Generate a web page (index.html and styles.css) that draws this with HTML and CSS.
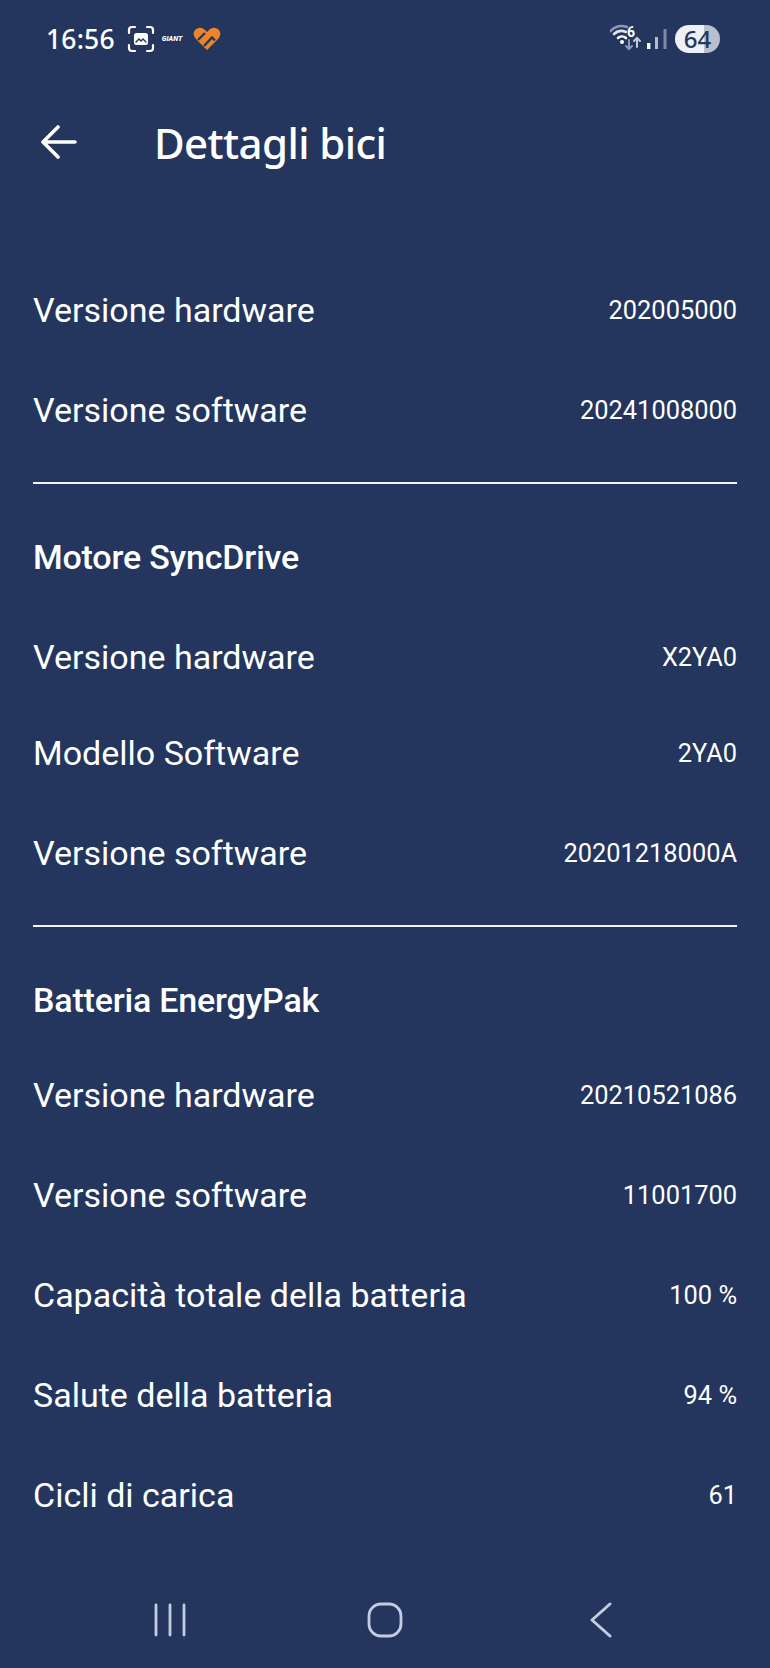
FILE: index.html
```html
<!DOCTYPE html>
<html lang="it">
<head>
    <meta charset="UTF-8">
    <meta name="viewport" content="width=device-width, initial-scale=1.0">
    <title>Dettagli bici</title>
    <link rel="stylesheet" href="styles.css">
</head>
<body>
    <div class="screen">
        <div class="status-bar">
            <div class="status-left">
                <span class="clock">16:56</span>
                <svg class="icon-shot" width="28" height="28" viewBox="0 0 28 28" fill="none" stroke="#fff" stroke-width="2.2" stroke-linecap="round">
                    <path d="M2 8V5a3 3 0 0 1 3-3h3M20 2h3a3 3 0 0 1 3 3v3M26 20v3a3 3 0 0 1-3 3h-3M8 26H5a3 3 0 0 1-3-3v-3"/>
                    <rect x="7" y="8" width="14" height="12" rx="2.5" fill="#fff" stroke="none"/>
                    <path d="M9 17l3-3 2 2 2-2 3 3" stroke="#24365e" stroke-width="1.4"/>
                </svg>
                <span class="giant-logo">GIANT</span>
                <svg class="icon-heart" width="28" height="26" viewBox="0 0 28 26" fill="none">
                    <path d="M14 24L2.5 12.5a6.500 6.500 0 0 1 0-9 6.500 6.500 0 0 1 9 0L14 6l2.500-2.500a6.500 6.500 0 0 1 9 0 6.500 6.500 0 0 1 0 9z" fill="#ee8427"/>
                    <path d="M5 14l7-7M11 20l8-8.500 3 3" stroke="#24365e" stroke-width="2.400"/>
                </svg>
            </div>
            <div class="status-right">
                <svg class="icon-wifi" width="34" height="30" viewBox="0 0 34 30" fill="none" stroke-linecap="round">
                    <path d="M0.500 7A16 16 0 0 1 17 3" stroke="#8d99b2" stroke-width="2.600"/>
                    <path d="M4 10A11 11 0 0 1 16 8" stroke="#dfe3ea" stroke-width="2.600"/>
                    <path d="M8 14A6 6 0 0 1 16 14" stroke="#fff" stroke-width="2.600"/>
                    <circle cx="12" cy="18" r="2" fill="#fff"/>
                    <path d="M19 16v9M16 22l3 3 3-3" stroke="#8d99b2" stroke-width="2"/>
                    <path d="M27 23v-9M24 17l3-3 3 3" stroke="#c5cbd8" stroke-width="2"/>
                </svg>
                <span class="wifi-six">6</span>
                <svg class="icon-signal" width="22" height="22" viewBox="0 0 22 22">
                    <rect x="2" y="15" width="3.400" height="6" fill="#fff"/>
                    <rect x="10" y="9" width="3" height="12" fill="#b4bccc"/>
                    <rect x="18.500" y="1" width="3" height="20" fill="#7d8aa6"/>
                </svg>
                <span class="battery">64</span>
            </div>
        </div>

        <div class="app-bar">
            <svg class="back-arrow" width="36" height="34" viewBox="0 0 36 34" fill="none" stroke="#fff" stroke-width="3.600" stroke-linecap="round" stroke-linejoin="round">
                <path d="M2 17h32M17 2L2 17l15 15"/>
            </svg>
            <h1>Dettagli bici</h1>
        </div>

        <div class="details">
            <div class="row"><span>Versione hardware</span><span class="value">202005000</span></div>
            <div class="row"><span>Versione software</span><span class="value">20241008000</span></div>
            <hr class="divider">

            <h2>Motore SyncDrive</h2>
            <div class="row"><span>Versione hardware</span><span class="value">X2YA0</span></div>
            <div class="row short"><span>Modello Software</span><span class="value">2YA0</span></div>
            <div class="row"><span>Versione software</span><span class="value">20201218000A</span></div>
            <hr class="divider">

            <h2 class="tight">Batteria EnergyPak</h2>
            <div class="row"><span>Versione hardware</span><span class="value">20210521086</span></div>
            <div class="row"><span>Versione software</span><span class="value">11001700</span></div>
            <div class="row"><span>Capacità totale della batteria</span><span class="value">100 %</span></div>
            <div class="row"><span>Salute della batteria</span><span class="value">94 %</span></div>
            <div class="row"><span>Cicli di carica</span><span class="value">61</span></div>
        </div>

        <div class="nav-bar">
            <svg width="34" height="34" viewBox="0 0 34 34" stroke="#c3cde0" stroke-width="2.800" stroke-linecap="round">
                <path d="M3 2v30M17 2v30M31 2v30"/>
            </svg>
            <svg class="nav-home" width="36" height="36" viewBox="0 0 36 36" fill="none" stroke="#c3cde0" stroke-width="2.800">
                <rect x="2" y="2" width="32" height="32" rx="12"/>
            </svg>
            <svg class="nav-back" width="24" height="36" viewBox="0 0 24 36" fill="none" stroke="#c3cde0" stroke-width="3" stroke-linecap="round" stroke-linejoin="round">
                <path d="M21 2L3 18l18 16"/>
            </svg>
        </div>
    </div>
</body>
</html>
```

FILE: styles.css
```css
* {
    margin: 0;
    padding: 0;
    box-sizing: border-box;
}

body {
    font-family: Roboto, 'Liberation Sans', sans-serif;
    background: #24365e;
    color: #fff;
}

.screen {
    height: 1668px;
    display: flex;
    flex-direction: column;
    overflow: hidden;
}

.status-bar {
    height: 78px;
    padding: 0 50px 0 46px;
    display: flex;
    align-items: center;
    justify-content: space-between;
}

.status-left,
.status-right {
    display: flex;
    align-items: center;
}

.clock {
    font-family: 'Noto Sans', sans-serif;
    font-size: 26.5px;
    font-weight: 500;
    letter-spacing: 0.2px;
    margin-right: 12px;
}

.giant-logo {
    width: 24px;
    margin: 0 7px 0 7px;
    font-size: 7px;
    font-weight: 900;
    font-style: italic;
}

.status-right {
    position: relative;
}

.wifi-six {
    position: absolute;
    left: 17px;
    top: 0;
    font-size: 14px;
    font-weight: 700;
}

.icon-signal {
    margin: 0 8px 0 1px;
}

.battery {
    width: 45px;
    height: 28px;
    border-radius: 14px;
    background: linear-gradient(to right, #eef0f5 0 29px, #b9bfcd 29px);
    color: #24365e;
    font-family: 'Noto Sans', sans-serif;
    font-size: 24px;
    font-weight: 500;
    line-height: 28px;
    text-align: center;
}

.app-bar {
    height: 128px;
    padding-left: 41px;
    display: flex;
    align-items: center;
}

.app-bar h1 {
    font-family: 'Noto Sans', sans-serif;
    font-size: 42px;
    font-weight: 500;
    margin-left: 77px;
    letter-spacing: -0.6px;
}

.details {
    padding: 54px 33px 0;
}

.row {
    height: 100px;
    display: flex;
    align-items: center;
    justify-content: space-between;
    font-size: 34px;
}

.row.short {
    height: 92px;
    margin-bottom: 4px;
}

.value {
    font-size: 25.4px;
}

.divider {
    border: 0;
    height: 2px;
    background: #f2f4f7;
    margin-top: 22px;
}

.details h2 {
    height: 100px;
    margin-top: 23px;
    display: flex;
    align-items: center;
    font-size: 34px;
    font-weight: 500;
    letter-spacing: -0.2px;
}

.details h2.tight {
    height: 95px;
    padding-top: 5px;
}

.nav-bar {
    margin-top: auto;
    height: 96px;
    padding-left: 153px;
    display: flex;
    align-items: center;
}

.nav-home {
    margin-left: 180px;
}

.nav-back {
    margin-left: 186px;
}
```
